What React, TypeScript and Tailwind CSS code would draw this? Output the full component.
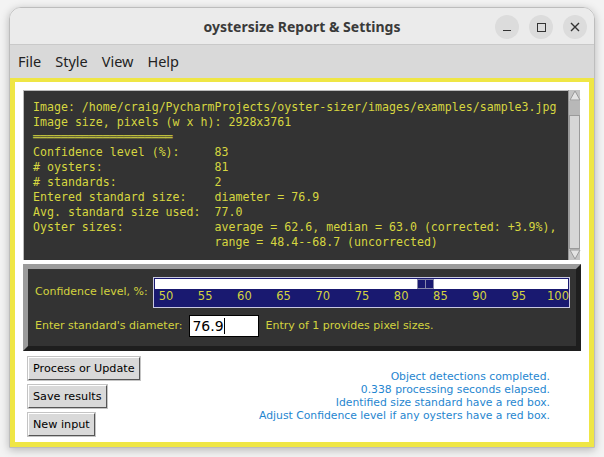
import React from 'react'

const report: string[] = [
  'Image: /home/craig/PycharmProjects/oyster-sizer/images/examples/sample3.jpg',
  'Image size, pixels (w x h): 2928x3761',
  '════════════════════',
  'Confidence level (%):     83',
  '# oysters:                81',
  '# standards:              2',
  'Entered standard size:    diameter = 76.9',
  'Avg. standard size used:  77.0',
  'Oyster sizes:             average = 62.6, median = 63.0 (corrected: +3.9%),',
  '                          range = 48.4--68.7 (uncorrected)',
]

const ticks = [50, 55, 60, 65, 70, 75, 80, 85, 90, 95, 100]

const status = [
  'Object detections completed.',
  '0.338 processing seconds elapsed.',
  'Identified size standard have a red box.',
  'Adjust Confidence level if any oysters have a red box.',
]

function TkButton({ label }: { label: string }) {
  return (
    <button className="h-[23px] px-[4px] bg-[#d9d9d9] text-[11.2px] text-black leading-none border border-t-white border-l-white border-r-[#555] border-b-[#555] shadow-[0_0_0_1px_#c4c4c4] self-start">
      {label}
    </button>
  )
}

export default function App() {
  return (
    <div className="w-[604px] h-[457px] bg-[#f3f3f3] pt-[7px] pl-[9px]" style={{ fontFamily: '"DejaVu Sans", sans-serif' }}>
      <div className="w-[586px] h-[441px] rounded-t-[12px] border border-[#bdbdbd] shadow-[0_2px_8px_rgba(0,0,0,0.25)] flex flex-col overflow-hidden">
        {/* title bar */}
        <div className="h-[37px] shrink-0 bg-[#ebebeb] border-b border-[#c9c9c9] relative flex items-center justify-center">
          <span className="text-[14px] font-bold text-[#3a3a3a]" style={{ fontFamily: '"Noto Sans", sans-serif' }}>oystersize Report &amp; Settings</span>
          <div className="absolute right-[7px] top-[7px] flex gap-[10px]">
            <div className="w-[24px] h-[24px] rounded-full bg-[#dcdcdc] flex items-center justify-center">
              <div className="w-[8px] h-[1.5px] bg-[#333] mt-[7px]" />
            </div>
            <div className="w-[24px] h-[24px] rounded-full bg-[#dcdcdc] flex items-center justify-center">
              <div className="w-[9px] h-[9px] border-[1.5px] border-[#333]" />
            </div>
            <div className="w-[24px] h-[24px] rounded-full bg-[#dcdcdc] flex items-center justify-center">
              <svg width="10" height="10" viewBox="0 0 10 10"><path d="M1 1 L9 9 M9 1 L1 9" stroke="#333" strokeWidth="1.4" /></svg>
            </div>
          </div>
        </div>
        {/* menu bar */}
        <div className="h-[33px] shrink-0 bg-[#d9d9d9] flex items-center pl-[8px] gap-[14px] text-[14.5px] text-[#222]" style={{ fontFamily: '"Noto Sans", sans-serif' }}>
          <span>File</span>
          <span>Style</span>
          <span>View</span>
          <span>Help</span>
        </div>
        {/* content */}
        <div className="flex-1 bg-[#efe645] pt-[4px] px-[5px] pb-[5px] flex">
          <div className="flex-1 bg-white pt-[8px] pl-[8px] pr-[8px] flex flex-col">
            <div className="flex h-[170px]">
              <div className="w-[545px] bg-[#333333] border-t border-l border-[#bbbbbb] pt-[9px] pl-[9px] text-[#d6d640] text-[11.6px] leading-[15px] whitespace-pre" style={{ fontFamily: '"DejaVu Sans Mono", monospace' }}>
                {report.map((l, i) => (
                  <div key={i}>{l}</div>
                ))}
              </div>
              <div className="w-[12px] bg-[#c4c4c4] flex flex-col border-l border-[#999]">
                <svg width="12" height="11" viewBox="0 0 12 11" className="shrink-0"><path d="M6 1 L11 10 L1 10 Z" fill="#e4e4e4" stroke="#9a9a9a" /></svg>
                <div className="h-[14px] bg-[#b8b8b8]" />
                <div className="flex-1 bg-[#d6d6d6] border border-[#9a9a9a]" />
                <svg width="12" height="11" viewBox="0 0 12 11" className="shrink-0"><path d="M6 10 L11 1 L1 1 Z" fill="#e4e4e4" stroke="#9a9a9a" /></svg>
              </div>
            </div>
            {/* control panel */}
            <div className="mt-[4px] w-[558px] h-[87px] bg-[#333333] border-[5px] border-t-[#9b9b9b] border-l-[#9b9b9b] border-r-[#1e1e1e] border-b-[#1e1e1e] pl-[7px] pt-[8px] text-[#d3d33f] text-[11px]">
              <div className="flex items-center">
                <span className="w-[118px]">Confidence level, %:</span>
                <div className="w-[417px] h-[31px] bg-[#191970] border border-[#c8c8e0] flex flex-col">
                  <div className="mt-[1px] mx-[1px] h-[10px] bg-white relative">
                    <div className="absolute left-[262px] top-0 h-[10px] w-[17px] flex border border-[#8888aa] bg-[#191970]">
                      <div className="flex-1 border-r border-[#8888aa]" />
                      <div className="flex-1" />
                    </div>
                  </div>
                  <div className="relative flex-1">
                    {ticks.map((t, i) => (
                      <span key={t} className="absolute top-[2px] -translate-x-1/2 text-[11.5px] leading-none" style={{ left: 12 + i * 39.2 }}>{t}</span>
                    ))}
                  </div>
                </div>
              </div>
              <div className="flex items-center mt-[7px]">
                <span>Enter standard's diameter:</span>
                <div className="ml-[7px] w-[70px] h-[22px] bg-white border border-black flex items-center pl-[2px] text-[14px] text-black">
                  76.9<span className="w-[1.5px] h-[16px] bg-black" />
                </div>
                <span className="ml-[6px]">Entry of 1 provides pixel sizes.</span>
              </div>
            </div>
            {/* buttons + status */}
            <div className="flex justify-between pl-[5px] pr-[31px] mt-[6px]">
              <div className="flex flex-col gap-[5px]">
                <TkButton label="Process or Update" />
                <TkButton label="Save results" />
                <TkButton label="New input" />
              </div>
              <div className="text-right text-[#1f86d0] text-[10.8px] leading-[13px] pt-[13px]">
                {status.map(s => (
                  <div key={s}>{s}</div>
                ))}
              </div>
            </div>
          </div>
        </div>
      </div>
    </div>
  )
}
